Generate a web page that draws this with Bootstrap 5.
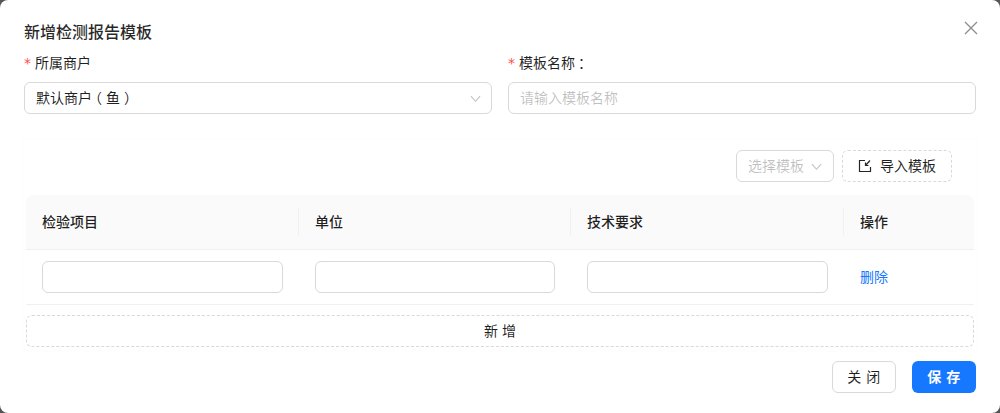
<!DOCTYPE html>
<html lang="zh">
<head>
<meta charset="utf-8">
<title>新增检测报告模板</title>
<link href="https://cdn.jsdelivr.net/npm/bootstrap@5.3.0/dist/css/bootstrap.min.css" rel="stylesheet">
<style>
html, body { height: 100%; }
body { background: #555; font-family: "Liberation Sans", "Noto Sans CJK SC", sans-serif; font-size: 14px; color: rgba(0,0,0,.88); overflow: hidden; }
.dlg { width: 1000px; height: 413px; background: #fff; border-radius: 8px; padding: 21px 24px 20px; }
.dlg-title { font-size: 16px; font-weight: 500; line-height: 24px; height: 24px; margin: 0; color: rgba(0,0,0,.85); }
.dlg-x { top: 21px; right: 22px; width: 14px; height: 14px; display: block; line-height: 0; }
.fld-label { height: 22px; line-height: 22px; margin-top: 7px; margin-bottom: 8px; font-size: 14px; }
.req { color: #ff4d4f; font-family: "DejaVu Sans", sans-serif; margin-right: 4px; }
.colon-mark { margin-left: 3px; }
.fld { height: 32px; border: 1px solid #d9d9d9; border-radius: 6px; background: #fff; padding: 0 11px; font-size: 14px; line-height: 30px; color: rgba(0,0,0,.88); }
.fld-input { width: 100%; display: block; outline: 0; }
.fld-input::placeholder { color: rgba(0,0,0,.25); opacity: 1; }
.paren-l { margin-left: -4px; margin-right: 4px; }
.paren-r { margin-left: 4px; margin-right: -4px; }
.tbl-wrap { margin-top: 26px; height: 210px; box-shadow: 0 0 4px rgba(0,0,0,.025); padding: 10px 2px 0; }
.tool-row { height: 32px; padding-right: 22px; margin-bottom: 13px; }
.sel-off { width: 98px; height: 32px; border: 1px solid #d9d9d9; border-radius: 6px; padding: 0 11px; color: rgba(0,0,0,.25); line-height: 30px; }
.dash-btn { height: 32px; border: 1px dashed #d9d9d9; border-radius: 6px; background: #fff; color: rgba(0,0,0,.88); font-size: 14px; }
.imp-btn { width: 110px; }
.grid-head, .grid-row { display: grid; grid-template-columns: 273px 272px 273px 1fr; }
.grid-head { height: 55px; background: #fafafa; border-bottom: 1px solid #f0f0f0; font-weight: 500; border-radius: 8px 8px 0 0; }
.head-cell { padding: 0 16px; line-height: 54px; position: relative; }
.head-cell:not(:last-child)::after { content: ""; position: absolute; right: 0; top: 13px; height: 28px; width: 1px; background: #f0f0f0; }
.grid-row { height: 55px; border-bottom: 1px solid #f0f0f0; }
.body-cell { padding: 11px 16px 0; }
.del-link { color: #1677ff; text-decoration: none; line-height: 32px; display: block; }
.add-btn { display: block; width: 948px; height: 32px; margin-top: 10px; }
.foot-btn { height: 32px; border-radius: 6px; font-size: 14px; letter-spacing: .5px; }
.btn-close-x { width: 64px; border: 1px solid #d9d9d9; background: #fff; color: rgba(0,0,0,.88); }
.btn-save { width: 64px; border: 0; background: #1677ff; color: #fff; font-weight: 600; }
.foot-row { margin-top: 11px; }
.sel-arrow { margin-right: -1px; }
</style>
</head>
<body>
<div class="dlg position-relative">
  <a class="dlg-x position-absolute" href="#" aria-label="关闭">
    <svg width="14" height="14" viewBox="0 0 14 14" fill="none" stroke="#8c8c8c" stroke-width="1.3"><path d="M1 1l12 12M13 1L1 13"/></svg>
  </a>
  <h5 class="dlg-title">新增检测报告模板</h5>
  <div class="row gx-3">
    <div class="col-6">
      <div class="fld-label"><span class="req">*</span>所属商户</div>
      <div class="fld d-flex justify-content-between align-items-center">
        <span class="text-nowrap">默认商户<span class="paren-l">（</span>鱼<span class="paren-r">）</span></span>
        <svg class="sel-arrow" width="11" height="11" viewBox="0 0 12 12" fill="none" stroke="#bfbfbf" stroke-width="1.1"><path d="M1 3.5l5 5.5 5-5.5"/></svg>
      </div>
    </div>
    <div class="col-6">
      <div class="fld-label"><span class="req">*</span>模板名称<span class="colon-mark">：</span></div>
      <input class="fld fld-input" type="text" placeholder="请输入模板名称">
    </div>
  </div>
  <div class="tbl-wrap">
    <div class="tool-row d-flex justify-content-end gap-2">
      <div class="sel-off d-flex justify-content-between align-items-center">
        <span>选择模板</span>
        <svg width="11" height="11" viewBox="0 0 12 12" fill="none" stroke="#bfbfbf" stroke-width="1.1"><path d="M1 3.5l5 5.5 5-5.5"/></svg>
      </div>
      <button type="button" class="dash-btn imp-btn d-flex align-items-center justify-content-center gap-2 p-0">
        <svg width="14" height="14" viewBox="0 0 14 14" fill="none" stroke="#262626" stroke-width="1.2"><path d="M7 1.5H1.5v11h11V8M12 1.5L7.5 6.5M7.5 3.5v3h3"/></svg>
        <span>导入模板</span>
      </button>
    </div>
    <div class="grid-head">
      <div class="head-cell">检验项目</div>
      <div class="head-cell">单位</div>
      <div class="head-cell">技术要求</div>
      <div class="head-cell">操作</div>
    </div>
    <div class="grid-row">
      <div class="body-cell"><input class="fld fld-input" type="text" aria-label="检验项目"></div>
      <div class="body-cell"><input class="fld fld-input" type="text" aria-label="单位"></div>
      <div class="body-cell"><input class="fld fld-input" type="text" aria-label="技术要求"></div>
      <div class="body-cell"><a class="del-link" href="#">删除</a></div>
    </div>
    <button type="button" class="dash-btn add-btn">新 增</button>
  </div>
  <div class="foot-row d-flex justify-content-end gap-3">
    <button type="button" class="foot-btn btn-close-x p-0">关 闭</button>
    <button type="button" class="foot-btn btn-save p-0">保 存</button>
  </div>
</div>
<script src="https://cdn.jsdelivr.net/npm/bootstrap@5.3.0/dist/js/bootstrap.bundle.min.js"></script>
</body>
</html>
